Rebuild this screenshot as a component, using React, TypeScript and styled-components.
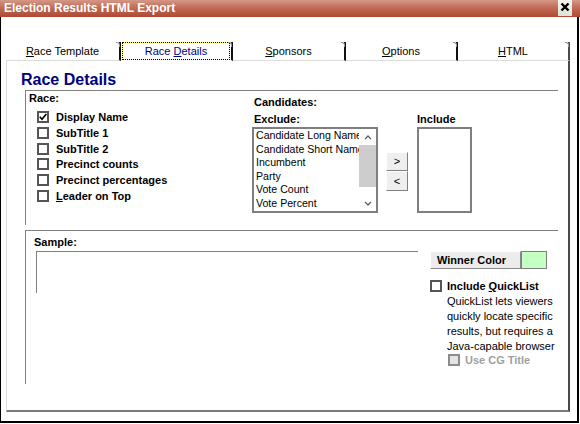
import React from "react";
import styled, { createGlobalStyle } from "styled-components";

const GlobalStyle = createGlobalStyle`
	html, body {
		margin: 0;
		padding: 0;
		background: #fff;
	}
	body {
		font-family: "Liberation Sans", Arial, sans-serif;
		font-size: 11px;
		color: #000;
	}
	* {
		box-sizing: border-box;
	}
`;

const tabs = [
	{ label: "Race Template", key: "R", rest: "ace Template", width: 115 },
	{ label: "Race Details", key: "D", pre: "Race ", rest: "etails", width: 112 },
	{ label: "Sponsors", key: "S", rest: "ponsors", width: 113 },
	{ label: "Options", key: "O", rest: "ptions", width: 112 },
	{ label: "HTML", key: "H", rest: "TML", width: 112 },
];

const raceFields = [
	{ key: "", rest: "Display Name", checked: true },
	{ key: "", rest: "SubTitle 1" },
	{ key: "", rest: "SubTitle 2" },
	{ key: "", rest: "Precinct counts" },
	{ key: "", rest: "Precinct percentages" },
	{ key: "L", rest: "eader on Top" },
];

const excluded = [
	"Candidate Long Name",
	"Candidate Short Name",
	"Incumbent",
	"Party",
	"Vote Count",
	"Vote Percent",
];

const quickListText = [
	"QuickList lets viewers",
	"quickly locate specific",
	"results, but requires a",
	"Java-capable browser",
];

const CheckMark = () => (
	<svg width="8" height="8" viewBox="0 0 8 8">
		<polyline points="0.8,3.8 3,6.3 7.3,1" fill="none" stroke="#000" strokeWidth="1.7" />
	</svg>
);

const Chevron = ({ up }: { up?: boolean }) => (
	<svg width="8" height="5" viewBox="0 0 8 5">
		<polyline
			points={up ? "1,4.2 4,1 7,4.2" : "1,0.8 4,4 7,0.8"}
			fill="none"
			stroke="#5a5a5a"
			strokeWidth="1.2"
		/>
	</svg>
);

const CloseIcon = () => (
	<svg width="10" height="10" viewBox="0 0 10 10">
		<path d="M1.5 1.5 L8.5 8.5 M8.5 1.5 L1.5 8.5" stroke="#000" strokeWidth="2.4" />
	</svg>
);

const App: React.FC = () => {
	return (
		<>
			<GlobalStyle />
			<Window>
				<TitleBar>
					<TitleText>Election Results HTML Export</TitleText>
					<CloseButton>
						<CloseIcon />
					</CloseButton>
				</TitleBar>
				<Frame>
					<TabStrip>
						{tabs.map((tab, i) => (
							<Tab key={tab.label} $width={tab.width} $active={i === 1} $last={i === tabs.length - 1}>
								{i === 1 ? (
									<FocusBox>
										{tab.pre}
										<u>{tab.key}</u>
										{tab.rest}
									</FocusBox>
								) : (
									<>
										<u>{tab.key}</u>
										{tab.rest}
									</>
								)}
							</Tab>
						))}
					</TabStrip>
					<Panel>
						<Heading>Race Details</Heading>
						<Groups>
							<Group $height={135}>
								<RaceColumns>
									<RaceColumn>
										<GroupLabel $indent={3}>Race:</GroupLabel>
										<CheckList>
											{raceFields.map((f) => (
												<CheckRow key={f.rest} $height={15.7} $gap={7}>
													<CheckBox>{f.checked && <CheckMark />}</CheckBox>
													<CheckLabel>
														{f.key && <u>{f.key}</u>}
														{f.rest}
													</CheckLabel>
												</CheckRow>
											))}
										</CheckList>
									</RaceColumn>
									<CandidatesColumn>
										<GroupLabel $indent={2}>Candidates:</GroupLabel>
										<PickerRow>
											<PickerColumn>
												<GroupLabel $indent={2}>Exclude:</GroupLabel>
												<ListBox $width={126}>
													<ListItems>
														{excluded.map((item) => (
															<ListItem key={item}>{item}</ListItem>
														))}
													</ListItems>
													<ScrollBar>
														<ScrollArrow>
															<Chevron up />
														</ScrollArrow>
														<ScrollThumb />
														<ScrollTrack />
														<ScrollArrow>
															<Chevron />
														</ScrollArrow>
													</ScrollBar>
												</ListBox>
											</PickerColumn>
											<MoveButtons>
												<MoveButton $height={19}>&gt;</MoveButton>
												<MoveButton $height={20}>&lt;</MoveButton>
											</MoveButtons>
											<PickerColumn>
												<GroupLabel $indent={0}>Include</GroupLabel>
												<ListBox $width={55} />
											</PickerColumn>
										</PickerRow>
									</CandidatesColumn>
								</RaceColumns>
							</Group>
							<Group $height={154} $gapTop={5}>
								<SampleLabel>Sample:</SampleLabel>
								<SampleRow>
									<SampleBox />
									<SideColumn>
										<WinnerRow>
											<WinnerButton>Winner Color</WinnerButton>
											<ColorSwatch />
										</WinnerRow>
										<CheckRow $height={12} $gap={5} $top={11}>
											<CheckBox />
											<CheckLabel>
												Include <u>Q</u>uickList
											</CheckLabel>
										</CheckRow>
										<HelpText>
											{quickListText.map((line) => (
												<HelpLine key={line}>{line}</HelpLine>
											))}
										</HelpText>
										<CheckRow $height={12} $gap={5} $top={0} $indent={18}>
											<CheckBox $disabled />
											<CheckLabel $disabled>Use CG Title</CheckLabel>
										</CheckRow>
									</SideColumn>
								</SampleRow>
							</Group>
						</Groups>
					</Panel>
				</Frame>
			</Window>
		</>
	);
};

export default App;

const Window = styled.div`
	width: 580px;
	height: 424px;
	display: flex;
	flex-direction: column;
	background: #fff;
`;

const TitleBar = styled.div`
	flex: none;
	height: 17px;
	display: flex;
	align-items: flex-start;
	padding-left: 4px;
	background: linear-gradient(to bottom, #d49787 0%, #c26c56 45%, #ad4930 100%);
	color: #fff;
	font-size: 12px;
	font-weight: bold;
	line-height: 16px;
`;

const TitleText = styled.span`
	flex: 1;
`;

const CloseButton = styled.div`
	width: 14px;
	height: 16px;
	margin-right: 8px;
	padding-top: 2px;
	display: flex;
	justify-content: center;
	align-items: flex-start;
	background: linear-gradient(to bottom, #f6f6f2, #dbe3d6);
`;

const Frame = styled.div`
	flex: 1;
	margin: 0 1px 1px 0;
	padding: 25px 0 0 5px;
	border-left: 1px solid #000;
	border-right: 2px solid #000;
	border-bottom: 2px solid #000;
`;

const TabStrip = styled.div`
	display: flex;
	height: 19px;
`;

const Tab = styled.div<{ $width: number; $active?: boolean; $last?: boolean }>`
	position: relative;
	width: ${(p) => p.$width}px;
	height: 19px;
	padding-top: ${(p) => (p.$active ? 0 : 1)}px;
	border-right: 2px solid ${(p) => (p.$last ? "#4a4a4a" : "#111")};
	border-bottom: 1px solid ${(p) => (p.$active ? "transparent" : "#dcdcdc")};
	text-align: center;
	line-height: 17px;
	color: ${(p) => (p.$active ? "#000080" : "#000")};

	&::before {
		content: "";
		position: absolute;
		top: 0;
		right: -1px;
		width: 3px;
		height: 4px;
		border-top: 1px solid #9a9a9a;
		border-right: 1px solid #9a9a9a;
		border-top-right-radius: 3px;
	}
`;

const FocusBox = styled.div`
	height: 18px;
	margin: 0 1px;
	padding-top: 1px;
	border: 1px dotted #000;
	background: #ffff80;
	box-shadow: inset 0 0 0 40px #fff;
	line-height: 15px;
`;

const Panel = styled.div`
	width: 564px;
	height: 351px;
	padding-top: 10px;
	border-left: 1px solid #dcdcdc;
	border-right: 2px solid #4a4a4a;
	border-bottom: 2px solid #7a7a7a;
`;

const Heading = styled.h1`
	margin: 0;
	padding-left: 14px;
	font-size: 16px;
	line-height: 18px;
	font-weight: bold;
	color: #000080;
`;

const Groups = styled.div`
	width: 533px;
	margin: 1px 0 0 18px;
`;

const Group = styled.div<{ $height: number; $gapTop?: number }>`
	height: ${(p) => p.$height}px;
	margin-top: ${(p) => p.$gapTop ?? 0}px;
	border-top: 1px solid #808080;
	border-left: 1px solid #808080;
`;

const RaceColumns = styled.div`
	display: grid;
	grid-template-columns: 226px 1fr;
`;

const RaceColumn = styled.div`
	padding-top: 1px;
`;

const GroupLabel = styled.div<{ $indent: number }>`
	padding-left: ${(p) => p.$indent}px;
	font-weight: bold;
	line-height: 13px;
	white-space: nowrap;
`;

const CheckList = styled.div`
	margin-top: 4.5px;
	padding-left: 11px;
`;

const CheckRow = styled.div<{ $height: number; $gap: number; $top?: number; $indent?: number }>`
	display: flex;
	align-items: center;
	gap: ${(p) => p.$gap}px;
	height: ${(p) => p.$height}px;
	margin-top: ${(p) => p.$top ?? 0}px;
	margin-left: ${(p) => p.$indent ?? 0}px;
`;

const CheckBox = styled.span<{ $disabled?: boolean }>`
	flex: none;
	width: 12px;
	height: 12px;
	display: flex;
	align-items: center;
	justify-content: center;
	border: 2px solid ${(p) => (p.$disabled ? "#8c8c8c" : "#555")};
	background: ${(p) => (p.$disabled ? "#e4e4e4" : "#fff")};
`;

const CheckLabel = styled.span<{ $disabled?: boolean }>`
	font-weight: bold;
	white-space: nowrap;
	line-height: 12px;
	color: ${(p) => (p.$disabled ? "#a0a0a0" : "#000")};
`;

const CandidatesColumn = styled.div`
	padding-top: 5px;
`;

const PickerRow = styled.div`
	display: flex;
	margin-top: 4px;
`;

const PickerColumn = styled.div`
	display: flex;
	flex-direction: column;
	gap: 1px;
`;

const ListBox = styled.div<{ $width: number }>`
	display: flex;
	width: ${(p) => p.$width}px;
	height: 86px;
	border: 2px solid #7f7f7f;
	background: #fff;
`;

const ListItems = styled.div`
	flex: 1;
	min-width: 0;
	overflow: hidden;
	padding-left: 2px;
	white-space: nowrap;
	font-size: 10.6px;
`;

const ListItem = styled.div`
	height: 13.5px;
	line-height: 13.5px;
`;

const ScrollBar = styled.div`
	flex: none;
	width: 17px;
	display: flex;
	flex-direction: column;
`;

const ScrollArrow = styled.div`
	height: 16px;
	display: flex;
	align-items: center;
	justify-content: center;
`;

const ScrollThumb = styled.div`
	height: 42px;
	background: #cdcdcd;
`;

const ScrollTrack = styled.div`
	flex: 1;
`;

const MoveButtons = styled.div`
	display: flex;
	flex-direction: column;
	margin: 0 9px 0 8px;
	padding-top: 39px;
`;

const MoveButton = styled.div<{ $height: number }>`
	width: 22px;
	height: ${(p) => p.$height}px;
	border: 1px solid;
	border-color: #fff #808080 #808080 #fff;
	background: #efefef;
	text-align: center;
	line-height: ${(p) => p.$height - 2}px;
`;

const SampleLabel = styled.div`
	padding: 5px 0 0 8px;
	font-weight: bold;
	line-height: 13px;
`;

const SampleRow = styled.div`
	display: flex;
	align-items: flex-start;
	margin-top: 2px;
	padding-left: 10px;
`;

const SampleBox = styled.div`
	width: 382px;
	height: 42px;
	border-top: 1px solid #808080;
	border-left: 1px solid #808080;
`;

const SideColumn = styled.div`
	display: flex;
	flex-direction: column;
	margin-left: 12px;
`;

const WinnerRow = styled.div`
	display: flex;
	height: 18px;
`;

const WinnerButton = styled.div`
	width: 91px;
	padding: 1px 0 0 6px;
	border: 1px solid;
	border-color: #fff #8a8a8a #8a8a8a #fff;
	background: #ececec;
	font-weight: bold;
	line-height: 14px;
`;

const ColorSwatch = styled.div`
	width: 26px;
	border: 1px solid #7f7f7f;
	background: #c4ffc4;
`;

const HelpText = styled.div`
	margin: 2px 0 0 17px;
	line-height: 15px;
`;

const HelpLine = styled.div`
	white-space: nowrap;
`;
